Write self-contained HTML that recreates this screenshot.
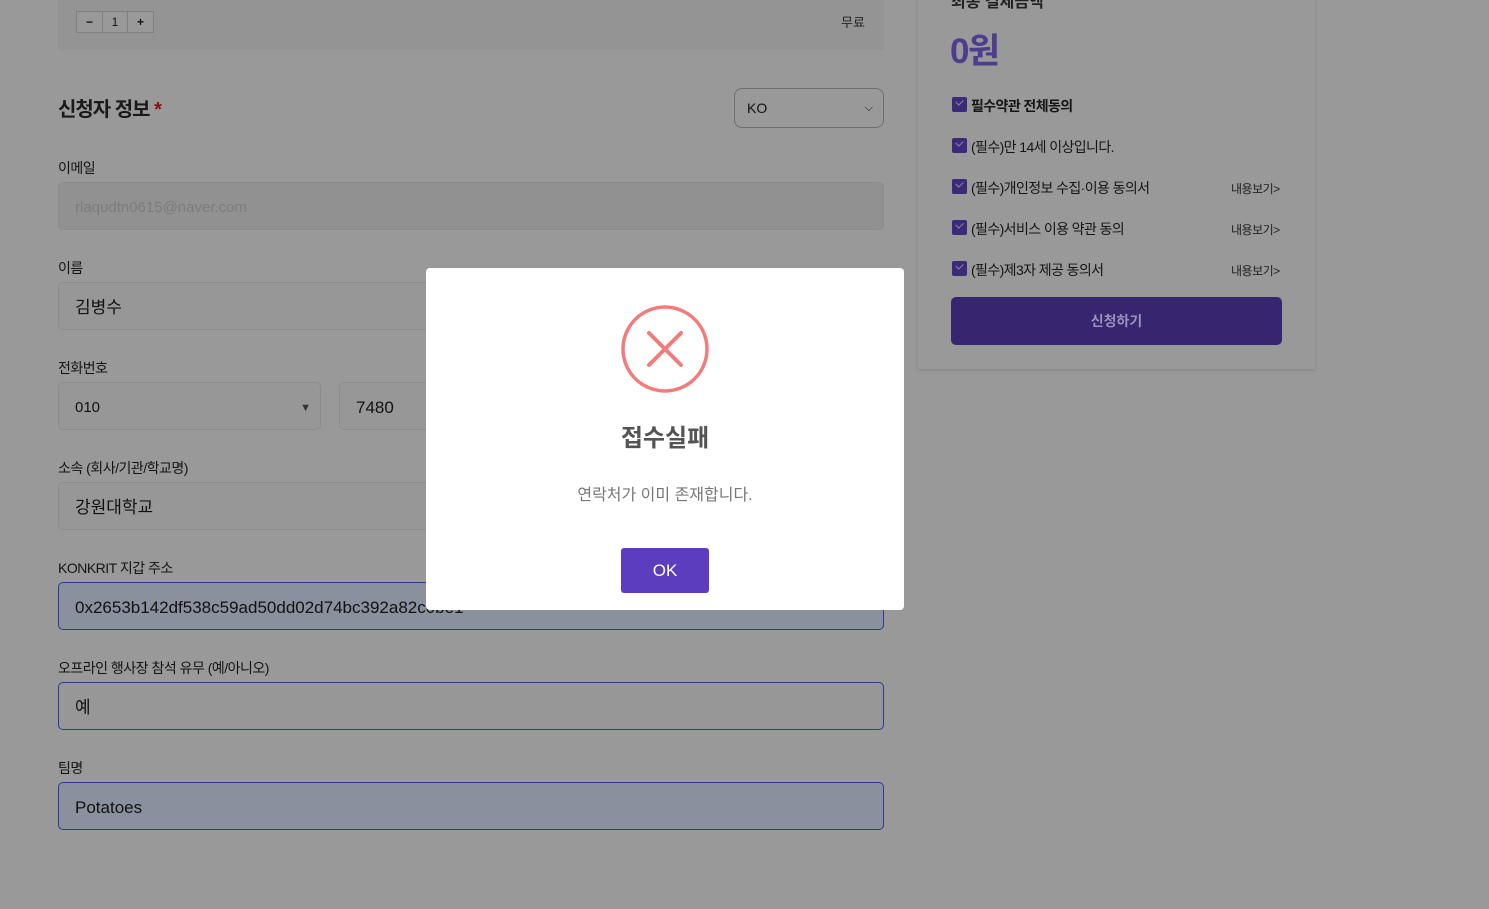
<!DOCTYPE html>
<html><head><meta charset="utf-8"><style>
*{box-sizing:border-box;margin:0;padding:0}
body{width:1489px;height:909px;background:#999;font-family:"Liberation Sans","Noto Sans CJK KR",sans-serif;position:relative;overflow:hidden;color:#111}
.a{position:absolute}
.lbl{position:absolute;left:58px;font-size:14px;color:#141414;letter-spacing:-0.5px}
.inp{position:absolute;left:58px;width:826px;height:48px;border:1px solid #8c8c8c;border-radius:5px;background:#979797;font-size:17px;padding-left:16px;line-height:50px;color:#111}
.blue{background:#8a909e;border-color:#2c3c8c}
.chk{position:absolute;left:952px;width:15px;height:15px;background:#3a2a78;border-radius:2px}
.chk:after{content:"";position:absolute;left:4px;top:2px;width:6px;height:4px;border-left:1.5px solid #8a86a8;border-bottom:1.5px solid #8a86a8;transform:rotate(-45deg)}
.ct{position:absolute;left:971px;font-size:14px;color:#151515;letter-spacing:-0.6px}
.more{position:absolute;left:1231px;font-size:12px;color:#202020;letter-spacing:-0.5px}
</style></head><body>
<div class="a" style="left:58px;top:0;width:826px;height:50px;background:#949494"></div>
<div class="a" style="left:76px;top:11px;width:78px;height:22px;border:1px solid #808080;display:flex;font-size:12px;background:#999">
<div style="width:26px;text-align:center;line-height:20px;border-right:1px solid #808080;font-weight:bold">−</div><div style="width:25px;text-align:center;line-height:20px;border-right:1px solid #808080">1</div><div style="width:25px;text-align:center;line-height:20px;font-weight:bold">+</div></div>
<div class="a" style="left:841px;top:12px;font-size:13px;color:#222">무료</div>
<div class="a" style="left:58px;top:93px;font-size:20px;font-weight:bold;color:#1a1a1a;letter-spacing:-1px">신청자 정보 <span style="color:#8a1010">*</span></div>
<div class="a" style="left:734px;top:88px;width:150px;height:40px;border:1px solid #6e6e6e;border-radius:8px;font-size:14px;line-height:38px;padding-left:12px">KO<span style="position:absolute;right:10px;top:0;font-size:11px">⌵</span></div>
<div class="lbl" style="top:158px">이메일</div>
<div class="inp" style="top:182px;background:#919191;color:#7c7c7c;font-size:15px">rlaqudtn0615@naver.com</div>
<div class="lbl" style="top:258px">이름</div>
<div class="inp" style="top:282px">김병수</div>
<div class="lbl" style="top:358px">전화번호</div>
<div class="inp" style="top:382px;width:263px;font-size:15px">010<span style="position:absolute;right:9px;top:0;font-size:11px;color:#333">▼</span></div>
<div class="inp" style="top:382px;left:339px;width:545px">7480</div>
<div class="lbl" style="top:458px">소속 (회사/기관/학교명)</div>
<div class="inp" style="top:482px">강원대학교</div>
<div class="lbl" style="top:558px">KONKRIT 지갑 주소</div>
<div class="inp blue" style="top:582px">0x2653b142df538c59ad50dd02d74bc392a82c0be1</div>
<div class="lbl" style="top:658px">오프라인 행사장 참석 유무 (예/아니오)</div>
<div class="inp" style="top:682px;border-color:#2c3c8c">예</div>
<div class="lbl" style="top:758px">팀명</div>
<div class="inp blue" style="top:782px">Potatoes</div>

<div class="a" style="left:918px;top:-10px;width:397px;height:379px;background:#999;box-shadow:0 1px 4px rgba(0,0,0,0.15)"></div>
<div class="a" style="left:951px;top:-12px;font-size:16px;font-weight:bold;color:#222">최종 결제금액</div>
<div class="a" style="left:950px;top:23px;font-size:35px;font-weight:bold;color:#4e3d8c;letter-spacing:-1.5px">0원</div>
<div class="chk" style="top:97px"></div><div class="ct" style="top:96px;font-weight:bold">필수약관 전체동의</div>
<div class="chk" style="top:138px"></div><div class="ct" style="top:137px">(필수)만 14세 이상입니다.</div>
<div class="chk" style="top:179px"></div><div class="ct" style="top:178px">(필수)개인정보 수집·이용 동의서</div><div class="more" style="top:180px">내용보기&gt;</div>
<div class="chk" style="top:220px"></div><div class="ct" style="top:219px">(필수)서비스 이용 약관 동의</div><div class="more" style="top:221px">내용보기&gt;</div>
<div class="chk" style="top:261px"></div><div class="ct" style="top:260px">(필수)제3자 제공 동의서</div><div class="more" style="top:262px">내용보기&gt;</div>
<div class="a" style="left:951px;top:297px;width:331px;height:48px;background:#37256f;border-radius:5px;color:#9a92b8;font-size:14px;font-weight:bold;text-align:center;line-height:48px">신청하기</div>

<div class="a" style="left:426px;top:268px;width:478px;height:342px;background:#fff;border-radius:4px">
<svg class="a" style="left:194px;top:36px" width="90" height="90" viewBox="0 0 90 90"><circle cx="45" cy="45" r="42" fill="none" stroke="#f07c7c" stroke-width="3.5"/><path d="M29 29L61 61M61 29L29 61" stroke="#f07c7c" stroke-width="4" stroke-linecap="round"/></svg>
<div class="a" style="left:0;width:478px;top:150px;text-align:center;font-size:24px;font-weight:bold;color:#545454">접수실패</div>
<div class="a" style="left:0;width:478px;top:213px;text-align:center;font-size:16px;color:#777">연락처가 이미 존재합니다.</div>
<div class="a" style="left:195px;top:280px;width:88px;height:45px;background:#5b3dbd;border-radius:3px;color:#fff;font-size:17px;text-align:center;line-height:45px">OK</div>
</div>
</body></html>
